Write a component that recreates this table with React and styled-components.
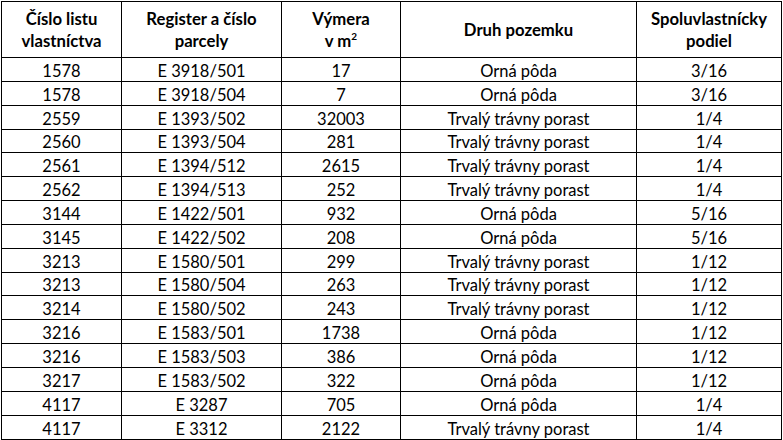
import React from "react";
import styled, { createGlobalStyle } from "styled-components";

const Global = createGlobalStyle`
  html, body { margin: 0; padding: 0; background: #fff; }
  body { font-family: Lato, "Open Sans", sans-serif; color: #000; }
`;

const Wrap = styled.div`
  padding: 1px 0 0 1px;
`;

const Table = styled.table`
  border-collapse: collapse;
  table-layout: fixed;
  width: 780px;
  font-family: Lato, "Open Sans", sans-serif;
  font-size: 16.5px;
`;

const HeadCell = styled.th`
  border: 1px solid #000;
  height: 55px;
  padding: 0;
  font-weight: 700;
  font-size: 16.7px;
  line-height: 22px;
  text-align: center;
  vertical-align: middle;
`;

const Cell = styled.td`
  border: 1px solid #000;
  height: ${(p) => p.$h}px;
  padding: 2px 0 0;
  line-height: 20px;
  text-align: center;
  vertical-align: middle;
  white-space: nowrap;
`;

const Sup = styled.sup`
  font-size: 10px;
  line-height: 0;
  vertical-align: 7px;
`;

const widths = [120, 160, 119, 236, 145];

const rows = [
  ["1578", "E 3918/501", "17", "Orná pôda", "3/16"],
  ["1578", "E 3918/504", "7", "Orná pôda", "3/16"],
  ["2559", "E 1393/502", "32003", "Trvalý trávny porast", "1/4"],
  ["2560", "E 1393/504", "281", "Trvalý trávny porast", "1/4"],
  ["2561", "E 1394/512", "2615", "Trvalý trávny porast", "1/4"],
  ["2562", "E 1394/513", "252", "Trvalý trávny porast", "1/4"],
  ["3144", "E 1422/501", "932", "Orná pôda", "5/16"],
  ["3145", "E 1422/502", "208", "Orná pôda", "5/16"],
  ["3213", "E 1580/501", "299", "Trvalý trávny porast", "1/12"],
  ["3213", "E 1580/504", "263", "Trvalý trávny porast", "1/12"],
  ["3214", "E 1580/502", "243", "Trvalý trávny porast", "1/12"],
  ["3216", "E 1583/501", "1738", "Orná pôda", "1/12"],
  ["3216", "E 1583/503", "386", "Orná pôda", "1/12"],
  ["3217", "E 1583/502", "322", "Orná pôda", "1/12"],
  ["4117", "E 3287", "705", "Orná pôda", "1/4"],
  ["4117", "E 3312", "2122", "Trvalý trávny porast", "1/4"],
];

const shortRows = new Set([3, 9]);

export default function App() {
  return (
    <Wrap>
      <Global />
      <Table>
        <colgroup>
          {widths.map((w, i) => (
            <col key={i} style={{ width: w }} />
          ))}
        </colgroup>
        <thead>
          <tr>
            <HeadCell>Číslo listu<br />vlastníctva</HeadCell>
            <HeadCell>Register a číslo<br />parcely</HeadCell>
            <HeadCell>Výmera<br />v m<Sup>2</Sup></HeadCell>
            <HeadCell>Druh pozemku</HeadCell>
            <HeadCell>Spoluvlastnícky<br />podiel</HeadCell>
          </tr>
        </thead>
        <tbody>
          {rows.map((r, i) => (
            <tr key={i}>
              {r.map((c, j) => (
                <Cell key={j} $h={shortRows.has(i) ? 20 : 21}>{c}</Cell>
              ))}
            </tr>
          ))}
        </tbody>
      </Table>
    </Wrap>
  );
}
